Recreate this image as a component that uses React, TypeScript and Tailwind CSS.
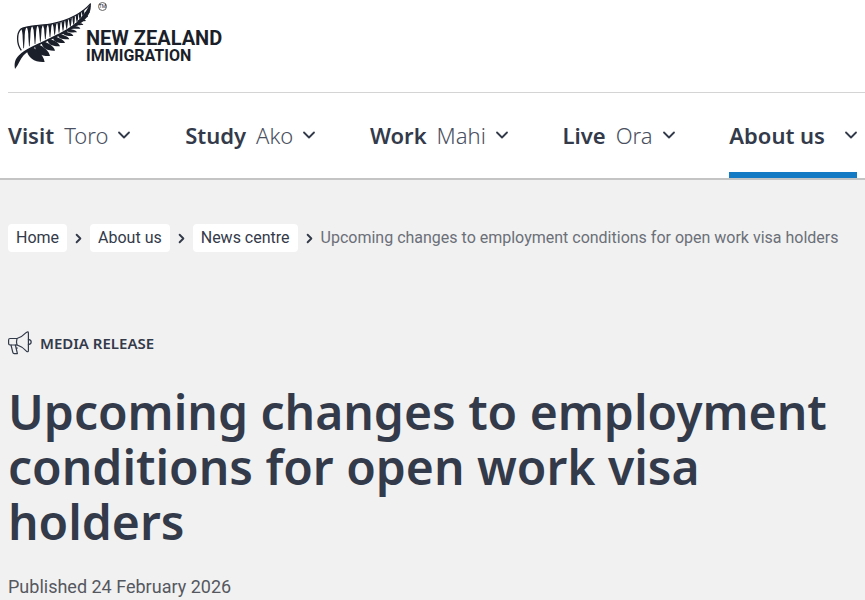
import { ChevronDown, ChevronRight } from "lucide-react";
import { cva } from "class-variance-authority";

const navItems = [
  { label: "Visit", maori: "Toro" },
  { label: "Study", maori: "Ako" },
  { label: "Work", maori: "Mahi" },
  { label: "Live", maori: "Ora" },
  { label: "About us", active: true },
];

const crumbs = ["Home", "About us", "News centre"];

const navButton = cva(
  "flex items-center border-b-6 pt-1 text-[22px] leading-7 whitespace-nowrap text-[#333a4a]",
  {
    variants: {
      active: {
        true: "gap-5 border-[#147ac3]",
        false: "gap-2.5 border-transparent",
      },
    },
  }
);

// Upper edge teeth: x, top, bottom and half width at the top
const teeth = [
  [71, 85, 145, 8],
  [88, 81, 139, 8],
  [105, 79, 132, 8],
  [121, 78, 125, 7],
  [136, 76, 118, 7],
  [150, 74, 111, 6],
  [164, 72, 104, 6],
  [177, 69, 98, 5],
  [189, 65, 92, 5],
  [200, 61, 86, 5],
  [211, 57, 80, 5],
  [221, 52, 74, 4],
  [231, 46, 67, 4],
  [240, 40, 60, 4],
  [249, 33, 50, 4],
];

// Lower leaflets: start x/y, tip x/y, scale
const leaflets = [
  [80, 150, 134, 186, 1],
  [105, 140, 150, 168, 0.75],
  [125, 130, 165, 152, 0.6],
  [143, 121, 180, 139, 0.5],
  [159, 113, 195, 129, 0.45],
  [174, 105, 208, 118, 0.4],
  [188, 97, 220, 108, 0.38],
  [201, 89, 231, 97, 0.35],
  [213, 80, 241, 86, 0.33],
  [224, 71, 250, 75, 0.32],
  [234, 61, 258, 63, 0.3],
  [244, 50, 264, 51, 0.3],
  [253, 38, 269, 38, 0.25],
];

function Fern() {
  return (
    <svg viewBox="42 6 234 204" className="mt-0.5 h-[68px] w-[78px]" fill="#1b1f2a" aria-hidden="true">
      <path d="M45 207 C42 190 45 178 57 166 C76 147 102 138 136 121 C178 100 214 84 237 60 C254 42 262 27 272 9 C276 34 262 56 240 71 C209 93 176 109 142 124 C106 141 86 151 71 166 C61 177 56 194 45 207Z" />
      <path
        d="M64 151 C49 133 50 100 62 88 C76 76 125 78 158 71 C205 61 247 39 272 11"
        fill="none"
        stroke="#1b1f2a"
        strokeWidth="4"
      />
      {teeth.map(([x, top, bottom, w]) => (
        <path
          key={x}
          d={`M${x - w} ${top} Q${x - 3} ${top + 9} ${x - 3} ${(top + bottom) / 2} L${x - 1} ${bottom} L${x + 1} ${bottom} L${x + 3} ${(top + bottom) / 2} Q${x + 3} ${top + 7} ${x + w} ${top - 3}Z`}
        />
      ))}
      {leaflets.map(([x, y, tx, ty, s]) => (
        <path
          key={x}
          d={`M${x} ${y} C${x + 4 * s} ${y + 24 * s} ${x + 24 * s} ${ty + 2 * s} ${tx} ${ty} C${tx - 6 * s} ${ty - 24 * s} ${x + 34 * s} ${y} ${x + 16 * s} ${y - 8 * s}Z`}
        />
      ))}
    </svg>
  );
}

function Megaphone() {
  return (
    <svg
      viewBox="0 0 24 24"
      className="size-6 shrink-0"
      fill="none"
      stroke="#333a4a"
      strokeWidth="1.2"
      strokeLinejoin="round"
      strokeLinecap="round"
      aria-hidden="true"
    >
      <path d="M9 7.5 H2 Q0.6 7.5 0.6 9 V12.6 Q0.6 14 2 14 H9 Q8 11 9 7.5Z" />
      <path d="M9 7.5 Q14 6 18.4 1.4 Q20.4 0 20.4 2 V19.6 Q20.4 21.6 18.4 20.2 Q14 15.4 9 14" />
      <path d="M20.4 8.4 Q23.2 8.8 23.2 11 Q23.2 13.2 20.4 13.6" />
      <path d="M3 14 L4.8 21.4 Q5.1 22.6 6.2 22.6 H9.4 L7.4 14 M8 17 H9.4" />
    </svg>
  );
}

export default function App() {
  return (
    <div className="min-h-screen bg-[#f1f1f1] font-['Noto_Sans',sans-serif] text-[#333a4a]">
      <header className="border-b-2 border-[#c4c4c4] bg-white">
        <div className="ml-2 border-b border-[#d4d4d4] pb-[22px]">
          <a href="#" className="flex items-start pl-1.5 font-['Roboto',sans-serif] text-[#1b1f2a]">
            <Fern />
            <span className="-ml-1.5 flex flex-col pt-7 font-bold">
              <span className="relative text-xl leading-5">
                NEW ZEALAND
                <sup className="absolute -top-[26px] left-3 flex size-[9px] items-center justify-center rounded-full border border-[#666] text-[5px] leading-none font-normal">
                  TM
                </sup>
              </span>
              <span className="text-base leading-4">IMMIGRATION</span>
            </span>
          </a>
        </div>
        <nav aria-label="Main" className="flex h-[85px] items-stretch justify-between px-2">
          {navItems.map((item) => (
            <button key={item.label} type="button" className={navButton({ active: !!item.active })}>
              <span className="font-semibold">{item.label}</span>
              {item.maori && <span className="font-light text-[#4a5060]">{item.maori}</span>}
              <ChevronDown size={20} strokeWidth={2.2} className="-mx-1" />
            </button>
          ))}
        </nav>
      </header>

      <main className="px-2 pt-11">
        <nav aria-label="Breadcrumb" className="font-['Roboto',sans-serif] text-base leading-7">
          <ol className="flex flex-wrap items-center gap-1">
            {crumbs.map((crumb) => (
              <li key={crumb} className="flex items-center gap-1">
                <a href="#" className="rounded-sm bg-white px-2">
                  {crumb}
                </a>
                <ChevronRight size={15} strokeWidth={3} />
              </li>
            ))}
            <li aria-current="page" className="text-[#6b6f78]">
              Upcoming changes to employment conditions for open work visa holders
            </li>
          </ol>
        </nav>

        <p className="mt-[79px] flex items-center gap-2 text-[15px] leading-6 font-semibold">
          <Megaphone />
          MEDIA RELEASE
        </p>
        <h1 className="mt-[29px] text-5xl leading-[55px] font-semibold">
          Upcoming changes to employment conditions for open work visa holders
        </h1>
        <p className="mt-[26px] font-['Roboto',sans-serif] text-lg leading-6 text-[#55585f]">
          Published 24 February 2026
        </p>
      </main>
    </div>
  );
}
